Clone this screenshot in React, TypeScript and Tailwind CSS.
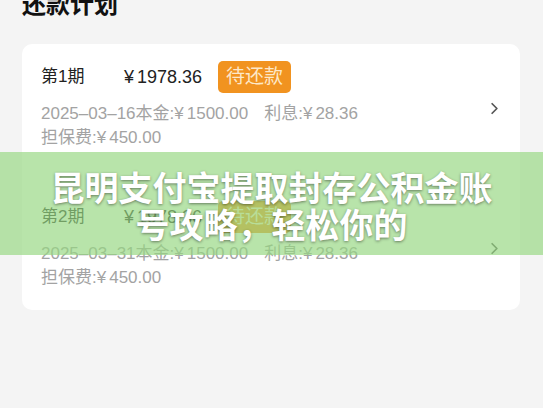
import { ChevronRight } from "lucide-react";

const FONT = "font-['Liberation_Sans','Noto_Sans_CJK_SC',sans-serif]";

const periods = [
  { label: "第1期", amount: "1978.36", date: "2025–03–16", principal: "1500.00", interest: "28.36", fee: "450.00" },
  { label: "第2期", amount: "1978.36", date: "2025–03–31", principal: "1500.00", interest: "28.36", fee: "450.00" },
];

function Yen({ v }: { v: string }) {
  return (
    <>
      <span className="mr-[3px]">¥</span>
      {v}
    </>
  );
}

function PeriodRow({ p }: { p: (typeof periods)[number] }) {
  return (
    <div className="flex items-center">
      <div className="min-w-0 flex-1">
        <div className="flex h-[32px] items-center text-[17px] text-[#222]">
          <span className="w-[83px]">{p.label}</span>
          <span className="w-[94px] text-[18px]">
            <Yen v={p.amount} />
          </span>
          <span className="flex h-[32px] items-center rounded-[5px] bg-[#f19320] px-[8px] text-[19px] text-[#fde8c8]">
            待还款
          </span>
        </div>
        <div className="mt-[9px] text-[17px] leading-[24px] text-[#a3a3a3]">
          {p.date}本金:<Yen v={p.principal} />
          <span className="ml-[16px]">
            利息:<Yen v={p.interest} />
          </span>
        </div>
        <div className="text-[17px] leading-[24px] text-[#a3a3a3]">
          担保费:<Yen v={p.fee} />
        </div>
      </div>
      <ChevronRight className="mt-[5px] size-[19px] text-[#555]" strokeWidth={2.2} />
    </div>
  );
}

export default function App() {
  return (
    <div className={`relative h-[408px] w-[543px] overflow-hidden bg-[#f4f4f4] px-[22px] ${FONT}`}>
      <h1 className="-mt-[7px] text-[24px] font-bold leading-[24px] text-[#111]">还款计划</h1>

      <div className="mt-[27px] w-[498px] rounded-[10px] bg-white pb-[20px] pl-[19px] pr-[16px] pt-[17px]">
        <div className="flex flex-col gap-[51px]">
          {periods.map((p) => (
            <PeriodRow key={p.label} p={p} />
          ))}
        </div>
      </div>

      <div className="absolute left-0 right-0 top-[152px] flex h-[103px] items-center justify-center bg-[rgba(150,215,130,0.68)]">
        <p className="w-[460px] pt-[9px] text-center text-[34px] font-bold leading-[37px] text-white [text-shadow:0_1px_3px_rgba(0,0,0,0.45)]">
          昆明支付宝提取封存公积金账号攻略，轻松你的
        </p>
      </div>
    </div>
  );
}
